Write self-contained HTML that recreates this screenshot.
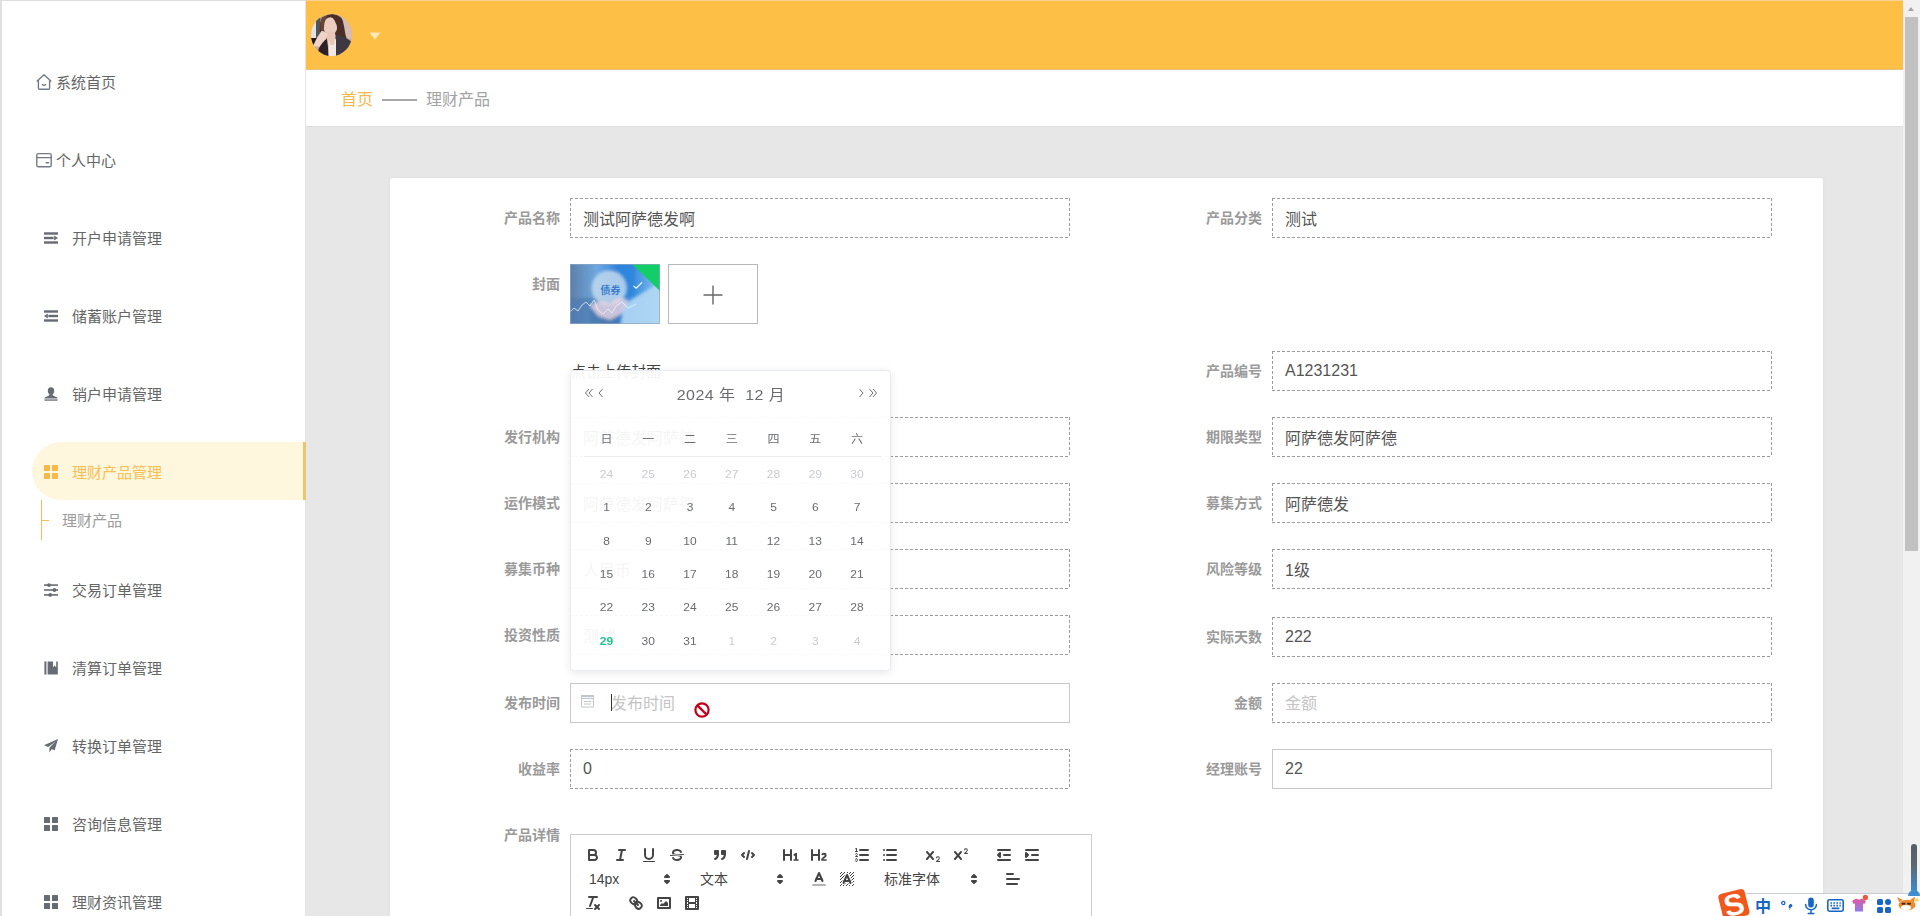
<!DOCTYPE html>
<html lang="zh-CN">
<head>
<meta charset="utf-8">
<title>理财产品</title>
<style>
*{box-sizing:border-box;margin:0;padding:0}
html,body{width:1920px;height:916px;overflow:hidden;background:#e7e7e7;font-family:"Liberation Sans","Noto Sans CJK SC",sans-serif;color:#666}
.abs{position:absolute}
#side{position:absolute;z-index:2;left:0;top:0;width:306px;height:916px;background:#fff;border-left:2px solid #e0e0e0;border-right:1px solid #e4e4e4}
.mi{position:absolute;left:0;height:58px;width:303px;font-size:15px;color:#666;line-height:58px;white-space:nowrap}
.mi svg{position:absolute}
.mi span{position:absolute;left:70px;top:1px}
.mi.top span{left:54px}
.mi.act{left:30px;width:274px;background:#fff6de;border-radius:29px 0 0 29px;border-right:3px solid #ecc66c;color:#f7be52}
.mi.act span{left:40px;top:2px}
#hdr{position:absolute;left:305px;top:0;width:1598px;height:70px;background:#fdbf45;border-top:1px solid #f6d295;border-bottom:1px solid #e9c27c}
#bc{position:absolute;left:305px;top:70px;width:1598px;height:57px;background:#fff;border-bottom:1px solid #dcdcdc}
#card{position:absolute;left:390px;top:178px;width:1433px;height:760px;background:#fff;border-radius:3px 3px 0 0;box-shadow:0 0 4px rgba(0,0,0,.04)}
.lab{position:absolute;width:160px;text-align:right;font-size:14px;font-weight:bold;color:#9a9a9a;line-height:20px;white-space:nowrap}
.inp{position:absolute;width:500px;height:40px;border:1px solid transparent;background:linear-gradient(90deg,#9c9c9c 3px,transparent 0) 0 0/5px 1px repeat-x,linear-gradient(90deg,#9c9c9c 3px,transparent 0) 0 100%/5px 1px repeat-x,linear-gradient(180deg,#9c9c9c 3px,transparent 0) 0 0/1px 5px repeat-y,linear-gradient(180deg,#9c9c9c 3px,transparent 0) 100% 0/1px 5px repeat-y,#fff;background-origin:border-box;font-size:16px;color:#555;line-height:42px;padding-left:12px;white-space:nowrap}
.inp.solid{border:1px solid #c8c8c8;background:#fff}
.ph{color:#c4c4c4}
#sb{position:absolute;left:1903px;top:0;width:17px;height:916px;background:#f1f1f1}
#sb i{position:absolute;left:2px;top:17px;width:13px;height:534px;background:#c1c1c1}
#sb b{position:absolute;left:5px;top:7px;width:0;height:0;border-left:3.5px solid transparent;border-right:3.5px solid transparent;border-bottom:4px solid #a3a3a3}

#pop{position:absolute;left:570px;top:370px;width:321px;height:301px;background:rgba(255,255,255,.94);border:1px solid rgba(228,231,237,.8);border-radius:4px;box-shadow:0 2px 10px rgba(0,0,0,.09)}
#pop .pt{position:absolute;margin-top:1px;width:40px;height:20px;line-height:20px;font-size:12px;text-align:center;white-space:nowrap;transform:scaleY(.9)}

#ed{position:absolute;left:570px;top:834px;width:522px;height:200px;background:#fff}
#tb{border:1px solid #ccc;padding:8px;font-size:0;line-height:0}
.qf{display:inline-block;vertical-align:middle;margin-right:15px;height:24px}
.qb{display:inline-block;float:left;width:28px;height:24px;padding:3px 5px;border:0;background:none}
.qb svg,.qp svg{width:18px;height:18px;display:block}
#tb .s{fill:none;stroke:#444;stroke-linecap:round;stroke-linejoin:round;stroke-width:2}
#tb .f{fill:#444}
#tb .f.s{fill:#444}
#tb .s.t{stroke-width:1}
.qp{display:inline-block;float:left;position:relative;height:24px;vertical-align:middle;color:#444;font-size:14px;font-weight:400}
.qp .ql{display:block;padding-left:8px;padding-right:2px;line-height:24px;height:24px;white-space:nowrap}
.qp svg{position:absolute;right:1px;top:50%;margin-top:-9px}
.qp.qi{width:28px;padding:3px 5px}
.qp.qi svg{position:static;margin:0}

#ime{position:absolute;left:1717px;top:888px;width:203px;height:28px;overflow:hidden}
</style>
</head>
<body>
<div id="side">
<div class="mi top" style="top:53px"><svg style="left:33px;top:20px" width="18" height="18" viewBox="0 0 18 18" fill="none" stroke="#747a84" stroke-width="1.4" stroke-linejoin="round" stroke-linecap="round"><path d="M2.2 8 L9 1.8 L15.8 8 M3.4 7 V15 a1.2 1.2 0 0 0 1.2 1.2 H13.4 a1.2 1.2 0 0 0 1.2 -1.2 V7"/><path d="M7.3 11.6 q1.7 1.5 3.4 0"/></svg><span>系统首页</span></div>
<div class="mi top" style="top:131px"><svg style="left:33px;top:20px" width="18" height="18" viewBox="0 0 18 18" fill="none" stroke="#747a84" stroke-width="1.4" stroke-linejoin="round" stroke-linecap="round"><rect x="1.8" y="2.6" width="14.4" height="13.2" rx="1.6"/><path d="M1.8 6.6 H16.2 M11.2 11.8 H13.6"/></svg><span>个人中心</span></div>
<div class="mi" style="top:209px"><svg style="left:42px;top:22px" width="14" height="14" viewBox="0 0 14 14" fill="#666c74"><rect x="0" y="1.3" width="14" height="2.4"/><rect x="0" y="5.8" width="9.6" height="2.4"/><rect x="0" y="10.3" width="14" height="2.4"/><path d="M10.2 4.5 L14 7 L10.2 9.5Z"/></svg><span>开户申请管理</span></div>
<div class="mi" style="top:287px"><svg style="left:42px;top:22px" width="14" height="14" viewBox="0 0 14 14" fill="#666c74"><rect x="0" y="1.3" width="14" height="2.4"/><rect x="4.4" y="5.8" width="9.6" height="2.4"/><rect x="0" y="10.3" width="14" height="2.4"/><path d="M3.8 4.5 L0 7 L3.8 9.5Z"/></svg><span>储蓄账户管理</span></div>
<div class="mi" style="top:365px"><svg style="left:42px;top:22px" width="14" height="14" viewBox="0 0 14 14" fill="#666c74"><path d="M7 0.3 C9.2 0.3 10.2 1.9 10.2 3.7 C10.2 5.4 9.4 6.6 8.6 7.3 C8.6 8.3 9 8.6 10.5 9.2 C12.3 9.9 13.6 10.3 13.6 11.6 H0.4 C0.4 10.3 1.7 9.9 3.5 9.2 C5 8.6 5.4 8.3 5.4 7.3 C4.6 6.6 3.8 5.4 3.8 3.7 C3.8 1.9 4.8 0.3 7 0.3Z"/><rect x="0.4" y="12.4" width="13.2" height="1.3"/></svg><span>销户申请管理</span></div>
<div class="mi act" style="top:442px"><svg style="left:12px;top:23px" width="14" height="14" viewBox="0 0 14 14" fill="#f7b84a"><rect x="0" y="0" width="6" height="6" rx=".6"/><rect x="8" y="0" width="6" height="6" rx=".6"/><rect x="0" y="8" width="6" height="6" rx=".6"/><rect x="8" y="8" width="6" height="6" rx=".6"/></svg><span>理财产品管理</span></div>
<div class="abs" style="left:39px;top:500px;width:1px;height:40px;background:#f3bf5a"></div>
<div class="abs" style="left:39px;top:520px;width:8px;height:1px;background:#f3bf5a"></div>
<div class="abs" style="left:60px;top:501px;font-size:15px;line-height:40px;color:#9c9c9c;white-space:nowrap">理财产品</div>
<div class="mi" style="top:561px"><svg style="left:42px;top:22px" width="14" height="14" viewBox="0 0 14 14" fill="#666c74"><rect x="0" y="1.3" width="14" height="1.6"/><rect x="0" y="6.2" width="14" height="1.6"/><rect x="0" y="11.1" width="14" height="1.6"/><circle cx="5" cy="2.1" r="1.9"/><circle cx="10.4" cy="7" r="1.9"/><circle cx="6.2" cy="11.9" r="1.9"/></svg><span>交易订单管理</span></div>
<div class="mi" style="top:639px"><svg style="left:42px;top:22px" width="14" height="14" viewBox="0 0 14 14" fill="#666c74"><rect x="0.4" y="0.4" width="2" height="13.2"/><path d="M3.6 0.4 H13.8 V13.6 H3.6 Z M9 0.4 V6.2 L10.6 4.6 L12.2 6.2 V0.4 Z" fill-rule="evenodd"/></svg><span>清算订单管理</span></div>
<div class="mi" style="top:717px"><svg style="left:42px;top:22px" width="14" height="14" viewBox="0 0 14 14" fill="#666c74"><path d="M14 0 L0 6.2 L4.2 8 L11.5 2.4 L5.4 8.8 V13.6 L7.8 10 L10.6 11.4 Z"/></svg><span>转换订单管理</span></div>
<div class="mi" style="top:795px"><svg style="left:42px;top:22px" width="14" height="14" viewBox="0 0 14 14" fill="#666c74"><rect x="0" y="0" width="6" height="6" rx=".6"/><rect x="8" y="0" width="6" height="6" rx=".6"/><rect x="0" y="8" width="6" height="6" rx=".6"/><rect x="8" y="8" width="6" height="6" rx=".6"/></svg><span>咨询信息管理</span></div>
<div class="mi" style="top:873px"><svg style="left:42px;top:22px" width="14" height="14" viewBox="0 0 14 14" fill="#666c74"><rect x="0" y="0" width="6" height="6" rx=".6"/><rect x="8" y="0" width="6" height="6" rx=".6"/><rect x="0" y="8" width="6" height="6" rx=".6"/><rect x="8" y="8" width="6" height="6" rx=".6"/></svg><span>理财资讯管理</span></div>
</div>
<div id="hdr">
<svg class="abs" style="left:6px;top:13px" width="41" height="42" viewBox="0 0 41 42"><defs><clipPath id="av"><ellipse cx="20.5" cy="21" rx="20.5" ry="21"/></clipPath><filter id="avb" x="-10%" y="-10%" width="120%" height="120%"><feGaussianBlur stdDeviation=".7"/></filter></defs><g clip-path="url(#av)"><rect width="41" height="42" fill="#c9aaa0"/><g filter="url(#avb)"><rect x="30" y="3" width="11" height="22" fill="#d9bbb2"/><rect x="0" y="4" width="6" height="24" fill="#e6e2e2"/><rect x="5" y="4" width="4.5" height="24" fill="#4f5659"/><rect x="0" y="24" width="9" height="8" fill="#1c1616"/><path d="M9 10 Q11 0 22 0 Q32 1 33 12 Q34 20 36 26 L24 30 L12 30 Q8 22 9 10Z" fill="#4b2f27"/><ellipse cx="19.3" cy="12.2" rx="7" ry="9" fill="#ecccbf"/><path d="M15 18 H24 L25 30 H16Z" fill="#e8c6b8"/><path d="M11 3 Q8 10 10.5 19 L13 14 Q13 6 17 2Z" fill="#6a4434"/><path d="M22 1 Q31 3 30 16 L26.5 21 Q27 9 21 3Z" fill="#4b2f27"/><path d="M10.5 17 Q14 16.5 17 21 L11 33 L2 32 Q5 24 10.500 17Z" fill="#f0d3c6"/><path d="M8 34 Q12 27 16 25 L18 42 H6Z" fill="#2e2126"/><path d="M25 21 Q34 22 41 28 V42 H24Z" fill="#3d3943"/><path d="M17.500 27 L25 25 L25 42 H17.500Z" fill="#f1e9e2"/><path d="M17 22 L24.500 21 L23 31 L19 31Z" fill="#e9c8ba"/></g></g></svg>
<svg class="abs" style="left:64px;top:31px" width="12" height="8" viewBox="0 0 12 8"><path d="M0.5 0.5 H11.5 L6 7.5Z" fill="#ffe9b8"/></svg>
</div>
<div id="bc">
<div class="abs" style="left:36px;top:18px;font-size:16px;line-height:24px;color:#f7b84a;white-space:nowrap">首页</div>
<div class="abs" style="left:77px;top:29px;width:35px;height:2px;background:#a6a6a6"></div>
<div class="abs" style="left:121px;top:18px;font-size:16px;line-height:24px;color:#a3a3a3;white-space:nowrap">理财产品</div>
</div>
<div id="card"></div>
<div id="form">
<div class="lab" style="left:400px;top:208px">产品名称</div><div class="inp" style="left:570px;top:198px">测试阿萨德发啊</div>
<div class="lab" style="left:400px;top:427px">发行机构</div><div class="inp" style="left:570px;top:417px">阿萨德发阿萨德</div>
<div class="lab" style="left:400px;top:493px">运作模式</div><div class="inp" style="left:570px;top:483px">阿萨德发阿萨德</div>
<div class="lab" style="left:400px;top:559px">募集币种</div><div class="inp" style="left:570px;top:549px">人民币</div>
<div class="lab" style="left:400px;top:625px">投资性质</div><div class="inp" style="left:570px;top:615px">测试</div>
<div class="lab" style="left:400px;top:759px">收益率</div><div class="inp" style="left:570px;top:749px;line-height:38px">0</div>
<div class="lab" style="left:1102px;top:208px">产品分类</div><div class="inp" style="left:1272px;top:198px">测试</div>
<div class="lab" style="left:1102px;top:361px">产品编号</div><div class="inp" style="left:1272px;top:351px;line-height:38px">A1231231</div>
<div class="lab" style="left:1102px;top:427px">期限类型</div><div class="inp" style="left:1272px;top:417px">阿萨德发阿萨德</div>
<div class="lab" style="left:1102px;top:493px">募集方式</div><div class="inp" style="left:1272px;top:483px">阿萨德发</div>
<div class="lab" style="left:1102px;top:559px">风险等级</div><div class="inp" style="left:1272px;top:549px">1级</div>
<div class="lab" style="left:1102px;top:627px">实际天数</div><div class="inp" style="left:1272px;top:617px;line-height:38px">222</div>
<div class="lab" style="left:1102px;top:693px">金额</div><div class="inp" style="left:1272px;top:683px;line-height:39px"><span class="ph">金额</span></div>
<div class="lab" style="left:1102px;top:759px">经理账号</div><div class="inp solid" style="left:1272px;top:749px;line-height:38px">22</div>
<div class="lab" style="left:400px;top:274px">封面</div>
<svg class="abs" style="left:570px;top:264px" width="90" height="60" viewBox="0 0 90 60"><defs><linearGradient id="cv" x1="0" y1="0" x2="1" y2="0"><stop offset="0" stop-color="#5d7fa8"/><stop offset=".3" stop-color="#6fa8e0"/><stop offset=".55" stop-color="#2f80d8"/><stop offset=".72" stop-color="#3d8fe0"/><stop offset="1" stop-color="#8cc4ee"/></linearGradient><clipPath id="cvc"><rect width="90" height="60"/></clipPath><filter id="cvb" x="-10%" y="-10%" width="120%" height="120%"><feGaussianBlur stdDeviation="1.6"/></filter></defs><g clip-path="url(#cvc)"><rect width="90" height="60" fill="url(#cv)"/><g filter="url(#cvb)"><rect x="-4" y="34" width="52" height="30" fill="#4c7ab0" opacity=".7"/><rect x="20" y="44" width="30" height="20" fill="#4678ae" opacity=".6"/><path d="M54 40 L94 16 V64 H50Z" fill="#b4d8f4" opacity=".9"/><rect x="48" y="-2" width="16" height="34" fill="#2f86dc" opacity=".9"/><circle cx="39" cy="24" r="17.500" fill="#bfd8ef" opacity=".85"/><path d="M20 42 Q30 34 40 40 Q48 30 58 36 L52 50 L40 56 L28 52Z" fill="#ecd6e2" opacity=".8"/></g><polyline points="0,48 4,44 8,47 12,41 16,38 20,42 24,36 28,46 33,50 38,45 42,49 46,42 52,38 58,44 66,40" fill="none" stroke="#eef6ff" stroke-width=".9" opacity=".85"/><text x="40.5" y="29.5" font-size="10" font-weight="bold" fill="#3a7ccb" text-anchor="middle" font-family="'Liberation Sans','Noto Sans CJK SC',sans-serif">债券</text><path d="M62 0 H90 V27Z" fill="#13ce66"/><path d="M63.500 21.800 L66.200 24.200 L72 18.400" fill="none" stroke="#fff" stroke-width="1.100"/></g><rect x=".5" y=".5" width="89" height="59" fill="none" stroke="#8fa7c4" stroke-width="1" opacity=".7"/></svg>
<div class="abs" style="left:668px;top:264px;width:90px;height:60px;border:1px solid #b9b9b9;background:#fff"></div>
<svg class="abs" style="left:703px;top:285px" width="20" height="20" viewBox="0 0 20 20"><path d="M10 .5 V19.5 M.5 10 H19.5" stroke="#666" stroke-width="1.4" fill="none"/></svg>
<div class="abs" style="left:571px;top:361px;font-size:15px;line-height:22px;color:#444;white-space:nowrap">点击上传封面</div>
<div class="lab" style="left:400px;top:693px">发布时间</div>
<div class="inp solid" style="left:570px;top:683px;padding-left:40px;line-height:40px"><span class="ph">发布时间</span></div>
<div class="abs" style="left:611px;top:694px;width:1px;height:17px;background:#333"></div>
<svg class="abs" style="left:581px;top:695px" width="13" height="13" viewBox="0 0 13 13" fill="none" stroke="#c3c6cc" stroke-width="1"><rect x=".5" y=".5" width="12" height="11.500"/><path d="M.5 3.500 H12.500 M3 6.500 H10 M3 9 H10" /><path d="M.5 1.500 H12.500" stroke-width="1.400"/></svg>
<svg class="abs" style="left:693px;top:701px" width="18" height="18" viewBox="0 0 18 18"><circle cx="9" cy="9" r="6.6" fill="#fff" stroke="#c4001a" stroke-width="2.2"/><path d="M4.6 4.6 L13.4 13.4" stroke="#c4001a" stroke-width="2.2"/></svg>
<div class="lab" style="left:400px;top:825px">产品详情</div>
</div>
<div id="ed"><div id="tb"><span class="qf"><button class="qb"><svg viewBox="0 0 18 18"><path class="s" d="M5,4H9.5A2.5,2.5,0,0,1,12,6.5v0A2.5,2.5,0,0,1,9.5,9H5A0,0,0,0,1,5,9V4A0,0,0,0,1,5,4Z"/><path class="s" d="M5,9h5.5A2.5,2.5,0,0,1,13,11.5v0A2.5,2.5,0,0,1,10.5,14H5a0,0,0,0,1,0,0V9A0,0,0,0,1,5,9Z"/></svg></button><button class="qb"><svg viewBox="0 0 18 18"><line class="s" x1="7" x2="13" y1="4" y2="4"/><line class="s" x1="5" x2="11" y1="14" y2="14"/><line class="s" x1="8" x2="10" y1="14" y2="4"/></svg></button><button class="qb"><svg viewBox="0 0 18 18"><path class="s" d="M5,3V9a4.012,4.012,0,0,0,4,4H9a4.012,4.012,0,0,0,4-4V3"/><rect class="f" height="1" rx="0.5" ry="0.5" width="12" x="3" y="15"/></svg></button><button class="qb"><svg viewBox="0 0 18 18"><line class="s t" x1="15.5" x2="2.5" y1="8.5" y2="9.5"/><path class="f" d="M9.007,8C6.542,7.791,6,7.519,6,6.5,6,5.792,7.283,5,9,5c1.571,0,2.765.679,2.969,1.309a1,1,0,0,0,1.9-.617C13.356,4.106,11.354,3,9,3,6.2,3,4,4.538,4,6.5a3.2,3.2,0,0,0,.5,1.843Z"/><path class="f" d="M8.984,10C11.457,10.208,12,10.479,12,11.5c0,0.708-1.283,1.5-3,1.5-1.571,0-2.765-.679-2.969-1.309a1,1,0,1,0-1.9.617C4.644,13.894,6.646,15,9,15c2.8,0,5-1.538,5-3.5a3.2,3.2,0,0,0-.5-1.843Z"/></svg></button></span><span class="qf"><button class="qb"><svg viewBox="0 0 18 18"><rect class="f s" height="3" width="3" x="4" y="5"/><rect class="f s" height="3" width="3" x="11" y="5"/><path class="f s" d="M7,8c0,4.031-3,5-3,5"/><path class="f s" d="M14,8c0,4.031-3,5-3,5"/></svg></button><button class="qb"><svg viewBox="0 0 18 18"><polyline class="s" points="5 7 3 9 5 11"/><polyline class="s" points="13 7 15 9 13 11"/><line class="s" x1="10" x2="8" y1="5" y2="13"/></svg></button></span><span class="qf"><button class="qb"><svg viewBox="0 0 18 18"><path class="f" d="M10,4V14a1,1,0,0,1-2,0V10H3v4a1,1,0,0,1-2,0V4A1,1,0,0,1,3,4V8H8V4a1,1,0,0,1,2,0Zm6.06787,9.209H14.98975V7.59863a.54085.54085,0,0,0-.605-.60547h-.62744a1.01119,1.01119,0,0,0-.748.29688L11.645,8.56641a.5435.5435,0,0,0-.022.8584l.28613.30762a.53861.53861,0,0,0,.84717.0332l.09912-.08789a1.2137,1.2137,0,0,0,.2417-.35254h.02246s-.01123.30859-.01123.60547V13.209H12.041a.54085.54085,0,0,0-.605.60547v.43945a.54085.54085,0,0,0,.605.60547h4.02686a.54085.54085,0,0,0,.605-.60547v-.43945A.54085.54085,0,0,0,16.06787,13.209Z"/></svg></button><button class="qb"><svg viewBox="0 0 18 18"><path class="f" d="M16.73975,13.81445v.43945a.54085.54085,0,0,1-.605.60547H11.855a.58392.58392,0,0,1-.64893-.60547V14.0127c0-2.90527,3.39941-3.42187,3.39941-4.55469a.77675.77675,0,0,0-.84717-.78125,1.17684,1.17684,0,0,0-.83594.38477c-.2749.26367-.561.374-.85791.13184l-.4292-.34082c-.30811-.24219-.38525-.51758-.1543-.81445a2.97155,2.97155,0,0,1,2.45361-1.17676,2.45393,2.45393,0,0,1,2.68408,2.40918c0,2.45312-3.1792,2.92676-3.27832,3.93848h2.79443A.54085.54085,0,0,1,16.73975,13.81445ZM9,3A.99974.99974,0,0,0,8,4V8H3V4A1,1,0,0,0,1,4V14a1,1,0,0,0,2,0V10H8v4a1,1,0,0,0,2,0V4A.99974.99974,0,0,0,9,3Z"/></svg></button></span><span class="qf"><button class="qb"><svg viewBox="0 0 18 18"><line class="s" x1="7" x2="15" y1="4" y2="4"/><line class="s" x1="7" x2="15" y1="9" y2="9"/><line class="s" x1="7" x2="15" y1="14" y2="14"/><line class="s t" x1="2.5" x2="4.5" y1="5.5" y2="5.5"/><path class="f" d="M3.5,6A0.5,0.5,0,0,1,3,5.5V3.085l-0.276.138A0.5,0.5,0,0,1,2.053,3c-0.124-.247-0.023-0.324.224-0.447l1-.5A0.5,0.5,0,0,1,4,2.5v3A0.5,0.5,0,0,1,3.5,6Z"/><path class="s t" d="M4.5,10.5h-2c0-.234,1.85-1.076,1.85-2.234A0.959,0.959,0,0,0,2.5,8.156"/><path class="s t" d="M2.5,14.846a0.959,0.959,0,0,0,1.85-.109A0.7,0.7,0,0,0,3.75,14a0.688,0.688,0,0,0,.6-0.736,0.959,0.959,0,0,0-1.85-.109"/></svg></button><button class="qb"><svg viewBox="0 0 18 18"><line class="s" x1="6" x2="15" y1="4" y2="4"/><line class="s" x1="6" x2="15" y1="9" y2="9"/><line class="s" x1="6" x2="15" y1="14" y2="14"/><line class="s" x1="3" x2="3" y1="4" y2="4"/><line class="s" x1="3" x2="3" y1="9" y2="9"/><line class="s" x1="3" x2="3" y1="14" y2="14"/></svg></button></span><span class="qf"><button class="qb"><svg viewBox="0 0 18 18"><path class="f" d="M15.5,15H13.861a3.858,3.858,0,0,0,1.914-2.975,1.8,1.8,0,0,0-1.6-1.751A1.921,1.921,0,0,0,12.021,11.7a0.50013,0.50013,0,1,0,.957.291h0a0.914,0.914,0,0,1,1.053-.725,0.81,0.81,0,0,1,.744.762c0,1.076-1.16971,1.86982-1.93971,2.43082A1.45639,1.45639,0,0,0,12,15.5a0.5,0.5,0,0,0,.5.5h3A0.5,0.5,0,0,0,15.5,15Z"/><path class="f" d="M9.65,5.241a1,1,0,0,0-1.409.108L6,7.964,3.759,5.349A1,1,0,0,0,2.192,6.59178Q2.21541,6.6213,2.241,6.649L4.684,9.5,2.241,12.35A1,1,0,0,0,3.71,13.70722q0.02557-.02768.049-0.05722L6,11.036,8.241,13.65a1,1,0,1,0,1.567-1.24277Q9.78459,12.3777,9.759,12.35L7.316,9.5,9.759,6.651A1,1,0,0,0,9.65,5.241Z"/></svg></button><button class="qb"><svg viewBox="0 0 18 18"><path class="f" d="M15.5,7H13.861a4.015,4.015,0,0,0,1.914-2.975,1.8,1.8,0,0,0-1.6-1.751A1.922,1.922,0,0,0,12.021,3.7a0.5,0.5,0,1,0,.957.291,0.917,0.917,0,0,1,1.053-.725,0.81,0.81,0,0,1,.744.762c0,1.077-1.164,1.925-1.934,2.486A1.423,1.423,0,0,0,12,7.5a0.5,0.5,0,0,0,.5.5h3A0.5,0.5,0,0,0,15.5,7Z"/><path class="f" d="M9.651,5.241a1,1,0,0,0-1.41.108L6,7.964,3.759,5.349a1,1,0,1,0-1.519,1.3L4.683,9.5,2.241,12.35a1,1,0,1,0,1.519,1.3L6,11.036,8.241,13.65a1,1,0,0,0,1.519-1.3L7.317,9.5,9.759,6.651A1,1,0,0,0,9.651,5.241Z"/></svg></button></span><span class="qf"><button class="qb"><svg viewBox="0 0 18 18"><line class="s" x1="3" x2="15" y1="14" y2="14"/><line class="s" x1="3" x2="15" y1="4" y2="4"/><line class="s" x1="9" x2="15" y1="9" y2="9"/><polyline class="s" points="5 7 5 11 3 9 5 7"/></svg></button><button class="qb"><svg viewBox="0 0 18 18"><line class="s" x1="3" x2="15" y1="14" y2="14"/><line class="s" x1="3" x2="15" y1="4" y2="4"/><line class="s" x1="9" x2="15" y1="9" y2="9"/><polyline class="f s" points="3 7 3 11 5 9 3 7"/></svg></button></span><span class="qf"><span class="qp" style="width:98px"><span class="ql" style="padding-left:10px">14px</span><svg viewBox="0 0 18 18"><polygon class="s" points="7 11 9 13 11 11 7 11"/><polygon class="s" points="7 7 9 5 11 7 7 7"/></svg></span></span><span class="qf"><span class="qp" style="width:98px"><span class="ql">文本</span><svg viewBox="0 0 18 18"><polygon class="s" points="7 11 9 13 11 11 7 11"/><polygon class="s" points="7 7 9 5 11 7 7 7"/></svg></span></span><span class="qf"><span class="qp qi"><svg viewBox="0 0 18 18"><line class="s" style="opacity:.4" x1="3" x2="15" y1="15" y2="15"/><polyline class="s" points="5.5 11 9 3 12.5 11"/><line class="s" x1="11.63" x2="6.38" y1="9" y2="9"/></svg></span><span class="qp qi"><svg viewBox="0 0 18 18"><g class="f"><polygon points="6 6.868 6 6 5 6 5 7 5.942 7 6 6.868"/><rect height="1" width="1" x="4" y="4"/><polygon points="6.817 5 6 5 6 6 6.38 6 6.817 5"/><rect height="1" width="1" x="2" y="6"/><rect height="1" width="1" x="3" y="5"/><rect height="1" width="1" x="4" y="7"/><polygon points="4 11.439 4 11 3 11 3 12 3.755 12 4 11.439"/><rect height="1" width="1" x="2" y="12"/><rect height="1" width="1" x="2" y="9"/><rect height="1" width="1" x="2" y="15"/><polygon points="4.63 10 4 10 4 11 4.192 11 4.63 10"/><rect height="1" width="1" x="3" y="8"/><path d="M10.832,4.2L11,4.582V4H10.708A1.948,1.948,0,0,1,10.832,4.2Z"/><path d="M7,4.582L7.168,4.2A1.929,1.929,0,0,1,7.292,4H7V4.582Z"/><path d="M8,13H7.683l-0.351.8a1.933,1.933,0,0,1-.124.2H8V13Z"/><rect height="1" width="1" x="12" y="2"/><rect height="1" width="1" x="11" y="3"/><path d="M9,3H8V3.282A1.985,1.985,0,0,1,9,3Z"/><rect height="1" width="1" x="2" y="3"/><rect height="1" width="1" x="6" y="2"/><rect height="1" width="1" x="3" y="2"/><rect height="1" width="1" x="5" y="3"/><rect height="1" width="1" x="9" y="2"/><rect height="1" width="1" x="15" y="14"/><polygon points="13.447 10.174 13.469 10.225 13.472 10.232 13.808 11 14 11 14 10 13.37 10 13.447 10.174"/><rect height="1" width="1" x="13" y="7"/><rect height="1" width="1" x="15" y="5"/><rect height="1" width="1" x="14" y="6"/><rect height="1" width="1" x="15" y="8"/><rect height="1" width="1" x="14" y="9"/><path d="M3.775,14H3v1H4V14.314A1.97,1.97,0,0,1,3.775,14Z"/><rect height="1" width="1" x="14" y="3"/><polygon points="12 6.868 12 6 11.62 6 12 6.868"/><rect height="1" width="1" x="15" y="2"/><rect height="1" width="1" x="12" y="5"/><rect height="1" width="1" x="13" y="4"/><polygon points="12.933 9 13 9 13 8 12.495 8 12.933 9"/><rect height="1" width="1" x="9" y="14"/><rect height="1" width="1" x="8" y="15"/><path d="M6,14.926V15H7V14.316A1.993,1.993,0,0,1,6,14.926Z"/><rect height="1" width="1" x="5" y="15"/><path d="M10.668,13.8L10.317,13H10v1h0.792A1.947,1.947,0,0,1,10.668,13.8Z"/><rect height="1" width="1" x="11" y="15"/><path d="M14.332,12.2a1.99,1.99,0,0,1,.166.8H15V12H14.245Z"/><rect height="1" width="1" x="14" y="15"/><rect height="1" width="1" x="15" y="11"/></g><polyline class="s" points="5.5 13 9 5 12.5 13"/><line class="s" x1="11.63" x2="6.38" y1="11" y2="11"/></svg></span></span><span class="qf"><span class="qp" style="width:108px"><span class="ql">标准字体</span><svg viewBox="0 0 18 18"><polygon class="s" points="7 11 9 13 11 11 7 11"/><polygon class="s" points="7 7 9 5 11 7 7 7"/></svg></span></span><span class="qf"><span class="qp qi"><svg viewBox="0 0 18 18"><line class="s" x1="3" x2="15" y1="9" y2="9"/><line class="s" x1="3" x2="13" y1="14" y2="14"/><line class="s" x1="3" x2="9" y1="4" y2="4"/></svg></span></span><span class="qf"><button class="qb"><svg viewBox="0 0 18 18"><line class="s" x1="5" x2="13" y1="3" y2="3"/><line class="s" x1="6" x2="9.35" y1="12" y2="3"/><line class="s" x1="11" x2="15" y1="11" y2="15"/><line class="s" x1="15" x2="11" y1="11" y2="15"/><rect class="f" height="1" rx="0.5" ry="0.5" width="7" x="2" y="14"/></svg></button></span><span class="qf"><button class="qb"><svg viewBox="0 0 18 18"><line class="s" x1="7" x2="11" y1="7" y2="11"/><path class="s" d="M8.9,4.577a3.476,3.476,0,0,1,.36,4.679A3.476,3.476,0,0,1,4.577,8.9C3.185,7.5,2.035,6.4,4.217,4.217S7.5,3.185,8.9,4.577Z"/><path class="s" d="M13.423,9.1a3.476,3.476,0,0,0-4.679-.36,3.476,3.476,0,0,0,.36,4.679c1.392,1.392,2.5,2.542,4.679.36S14.815,10.5,13.423,9.1Z"/></svg></button><button class="qb"><svg viewBox="0 0 18 18"><rect class="s" height="10" width="12" x="3" y="4"/><circle class="f" cx="6" cy="7" r="1"/><polyline class="f" points="5 12 5 11 7 9 8 10 11 7 13 9 13 12 5 12"/></svg></button><button class="qb"><svg viewBox="0 0 18 18"><rect class="s" height="12" width="12" x="3" y="3"/><rect class="f" height="12" width="1" x="5" y="3"/><rect class="f" height="12" width="1" x="12" y="3"/><rect class="f" height="2" width="8" x="5" y="8"/><rect class="f" height="1" width="3" x="3" y="5"/><rect class="f" height="1" width="3" x="3" y="7"/><rect class="f" height="1" width="3" x="3" y="10"/><rect class="f" height="1" width="3" x="3" y="12"/><rect class="f" height="1" width="3" x="12" y="5"/><rect class="f" height="1" width="3" x="12" y="7"/><rect class="f" height="1" width="3" x="12" y="10"/><rect class="f" height="1" width="3" x="12" y="12"/></svg></button></span></div></div>
<div id="pop">
<div class="pt" style="left:0;width:320px;top:13px;font-size:16px;line-height:22px;letter-spacing:.45px;color:#6a6c70">2024 年&nbsp; 12 月</div>
<svg class="abs" style="left:12px;top:16px" width="24" height="12" viewBox="0 0 24 12" fill="none" stroke="#6e7076" stroke-width="1"><path d="M6 2 L2.5 6 L6 10 M9.5 2 L6 6 L9.5 10 M19.5 2 L16 6 L19.5 10"/></svg>
<svg class="abs" style="left:284px;top:16px" width="24" height="12" viewBox="0 0 24 12" fill="none" stroke="#6e7076" stroke-width="1"><path d="M4.5 2 L8 6 L4.5 10 M14.5 2 L18 6 L14.5 10 M18 2 L21.5 6 L18 10"/></svg>
<div class="pt" style="left:15.5px;top:57px;color:#6a6c70">日</div><div class="pt" style="left:57.3px;top:57px;color:#6a6c70">一</div><div class="pt" style="left:99.0px;top:57px;color:#6a6c70">二</div><div class="pt" style="left:140.8px;top:57px;color:#6a6c70">三</div><div class="pt" style="left:182.5px;top:57px;color:#6a6c70">四</div><div class="pt" style="left:224.3px;top:57px;color:#6a6c70">五</div><div class="pt" style="left:266.0px;top:57px;color:#6a6c70">六</div>
<div class="abs" style="left:13px;top:85px;width:297px;height:1px;background:#ecedf1"></div>
<div class="pt" style="left:15.5px;top:92px;color:#c9cbd0">24</div><div class="pt" style="left:57.3px;top:92px;color:#c9cbd0">25</div><div class="pt" style="left:99.0px;top:92px;color:#c9cbd0">26</div><div class="pt" style="left:140.8px;top:92px;color:#c9cbd0">27</div><div class="pt" style="left:182.5px;top:92px;color:#c9cbd0">28</div><div class="pt" style="left:224.3px;top:92px;color:#c9cbd0">29</div><div class="pt" style="left:266.0px;top:92px;color:#c9cbd0">30</div>
<div class="pt" style="left:15.5px;top:125px;color:#6a6c70">1</div><div class="pt" style="left:57.3px;top:125px;color:#6a6c70">2</div><div class="pt" style="left:99.0px;top:125px;color:#6a6c70">3</div><div class="pt" style="left:140.8px;top:125px;color:#6a6c70">4</div><div class="pt" style="left:182.5px;top:125px;color:#6a6c70">5</div><div class="pt" style="left:224.3px;top:125px;color:#6a6c70">6</div><div class="pt" style="left:266.0px;top:125px;color:#6a6c70">7</div>
<div class="pt" style="left:15.5px;top:159px;color:#6a6c70">8</div><div class="pt" style="left:57.3px;top:159px;color:#6a6c70">9</div><div class="pt" style="left:99.0px;top:159px;color:#6a6c70">10</div><div class="pt" style="left:140.8px;top:159px;color:#6a6c70">11</div><div class="pt" style="left:182.5px;top:159px;color:#6a6c70">12</div><div class="pt" style="left:224.3px;top:159px;color:#6a6c70">13</div><div class="pt" style="left:266.0px;top:159px;color:#6a6c70">14</div>
<div class="pt" style="left:15.5px;top:192px;color:#6a6c70">15</div><div class="pt" style="left:57.3px;top:192px;color:#6a6c70">16</div><div class="pt" style="left:99.0px;top:192px;color:#6a6c70">17</div><div class="pt" style="left:140.8px;top:192px;color:#6a6c70">18</div><div class="pt" style="left:182.5px;top:192px;color:#6a6c70">19</div><div class="pt" style="left:224.3px;top:192px;color:#6a6c70">20</div><div class="pt" style="left:266.0px;top:192px;color:#6a6c70">21</div>
<div class="pt" style="left:15.5px;top:225px;color:#6a6c70">22</div><div class="pt" style="left:57.3px;top:225px;color:#6a6c70">23</div><div class="pt" style="left:99.0px;top:225px;color:#6a6c70">24</div><div class="pt" style="left:140.8px;top:225px;color:#6a6c70">25</div><div class="pt" style="left:182.5px;top:225px;color:#6a6c70">26</div><div class="pt" style="left:224.3px;top:225px;color:#6a6c70">27</div><div class="pt" style="left:266.0px;top:225px;color:#6a6c70">28</div>
<div class="pt" style="left:15.5px;top:259px;color:#22c38e;font-weight:bold">29</div><div class="pt" style="left:57.3px;top:259px;color:#6a6c70">30</div><div class="pt" style="left:99.0px;top:259px;color:#6a6c70">31</div><div class="pt" style="left:140.8px;top:259px;color:#c9cbd0">1</div><div class="pt" style="left:182.5px;top:259px;color:#c9cbd0">2</div><div class="pt" style="left:224.3px;top:259px;color:#c9cbd0">3</div><div class="pt" style="left:266.0px;top:259px;color:#c9cbd0">4</div>
</div>
<div id="sb"><b></b><i></i></div>
<div id="ime">
<div class="abs" style="left:27px;top:5px;width:176px;height:24px;background:#fff;border-top:1px solid #c9cdd3;border-left:1px solid #dfe2e6"></div>
<svg class="abs" style="left:0;top:0" width="36" height="30" viewBox="0 0 36 30"><g transform="rotate(-14 17 15)"><rect x="3" y="3" width="27" height="27" rx="4" fill="#f0581c"/><text x="16.5" y="27" font-size="30" font-weight="bold" fill="#fff" text-anchor="middle" font-family="'Liberation Sans',sans-serif">S</text></g></svg>
<div class="abs" style="left:38px;top:8px;font-size:16px;line-height:22px;font-weight:bold;color:#1766c5">中</div>
<svg class="abs" style="left:63px;top:11px" width="14" height="14" viewBox="0 0 14 14"><circle cx="3.3" cy="4" r="1.6" fill="none" stroke="#1766c5" stroke-width="1.3"/><path d="M9 6.6 a1.7 1.7 0 1 1 1.7 1.7 q0 1.8 -1.8 3 q.9 -1.4 .6 -2.2 a1.6 1.6 0 0 1 -.5 -2.5Z" fill="#1766c5"/></svg>
<svg class="abs" style="left:87px;top:9px" width="14" height="18" viewBox="0 0 14 18"><rect x="4.2" y="0.5" width="5.6" height="10" rx="2.8" fill="#1766c5"/><path d="M1.6 7.4 a5.4 5.4 0 0 0 10.8 0 M7 12.8 V16 M4.2 16.4 H9.8" fill="none" stroke="#1766c5" stroke-width="1.5" stroke-linecap="round"/></svg>
<svg class="abs" style="left:110px;top:11px" width="17" height="13" viewBox="0 0 17 13"><rect x=".8" y=".8" width="15.4" height="11.4" rx="1.6" fill="none" stroke="#1766c5" stroke-width="1.6"/><path d="M3.4 4 H5 M6.4 4 H8 M9.4 4 H11 M12.4 4 H13.8 M3.4 6.6 H5 M6.4 6.6 H8 M9.4 6.6 H11 M12.4 6.6 H13.8 M4.6 9.4 H12.4" stroke="#1766c5" stroke-width="1.6"/></svg>
<svg class="abs" style="left:133px;top:6px" width="20" height="20" viewBox="0 0 20 20"><defs><linearGradient id="sh" x1="0" y1="0" x2="0" y2="1"><stop offset="0" stop-color="#e35a9a"/><stop offset="1" stop-color="#8f7cf0"/></linearGradient></defs><path d="M2 7 L6 4.4 Q9 6.6 12 4.4 L16 7 L14.4 10 L13 9.4 V17.4 H5 V9.4 L3.6 10Z" fill="url(#sh)"/><circle cx="15.4" cy="3.4" r="2.6" fill="#f2553c"/></svg>
<svg class="abs" style="left:160px;top:11px" width="14" height="14" viewBox="0 0 14 14" fill="#1766c5"><rect x="0" y="0" width="6" height="6" rx="1.6"/><circle cx="11" cy="3" r="3"/><rect x="0" y="8" width="6" height="6" rx="1.6"/><rect x="8" y="8" width="6" height="6" rx="1.6"/></svg>
<svg class="abs" style="left:179px;top:8px" width="26" height="20" viewBox="0 0 26 20"><ellipse cx="11" cy="9" rx="8.5" ry="5.2" fill="#f08a2c"/><path d="M3 6 L1 1 L7 4Z M14 4 L19 0.6 L18 7Z" fill="#f08a2c"/><ellipse cx="10" cy="11.6" rx="5" ry="2.6" fill="#fff"/><rect x="5.500" y="6.800" width="4" height="2" rx="1" fill="#3a3230"/><rect x="11" y="6.800" width="4" height="2" rx="1" fill="#3a3230"/><path d="M21 1 L21.8 3.4 L24 4 L21.8 4.8 L21 7 L20.2 4.8 L18 4 L20.2 3.4Z" fill="#ffd44a"/></svg>
</div>
<div class="abs" style="left:1911px;top:844px;width:6px;height:52px;border-radius:3px 3px 0 0;background:linear-gradient(#575d66 0,#5d6670 40%,#3f88c4 85%,#3a93d8 100%)"></div>
<div class="abs" style="left:1908px;top:890px;width:12px;height:6px;border-radius:6px 6px 0 0;background:#3f8fd0"></div>
<div class="abs" style="left:0;top:0;width:306px;height:1px;background:#dedede;z-index:5"></div>
</body>
</html>
